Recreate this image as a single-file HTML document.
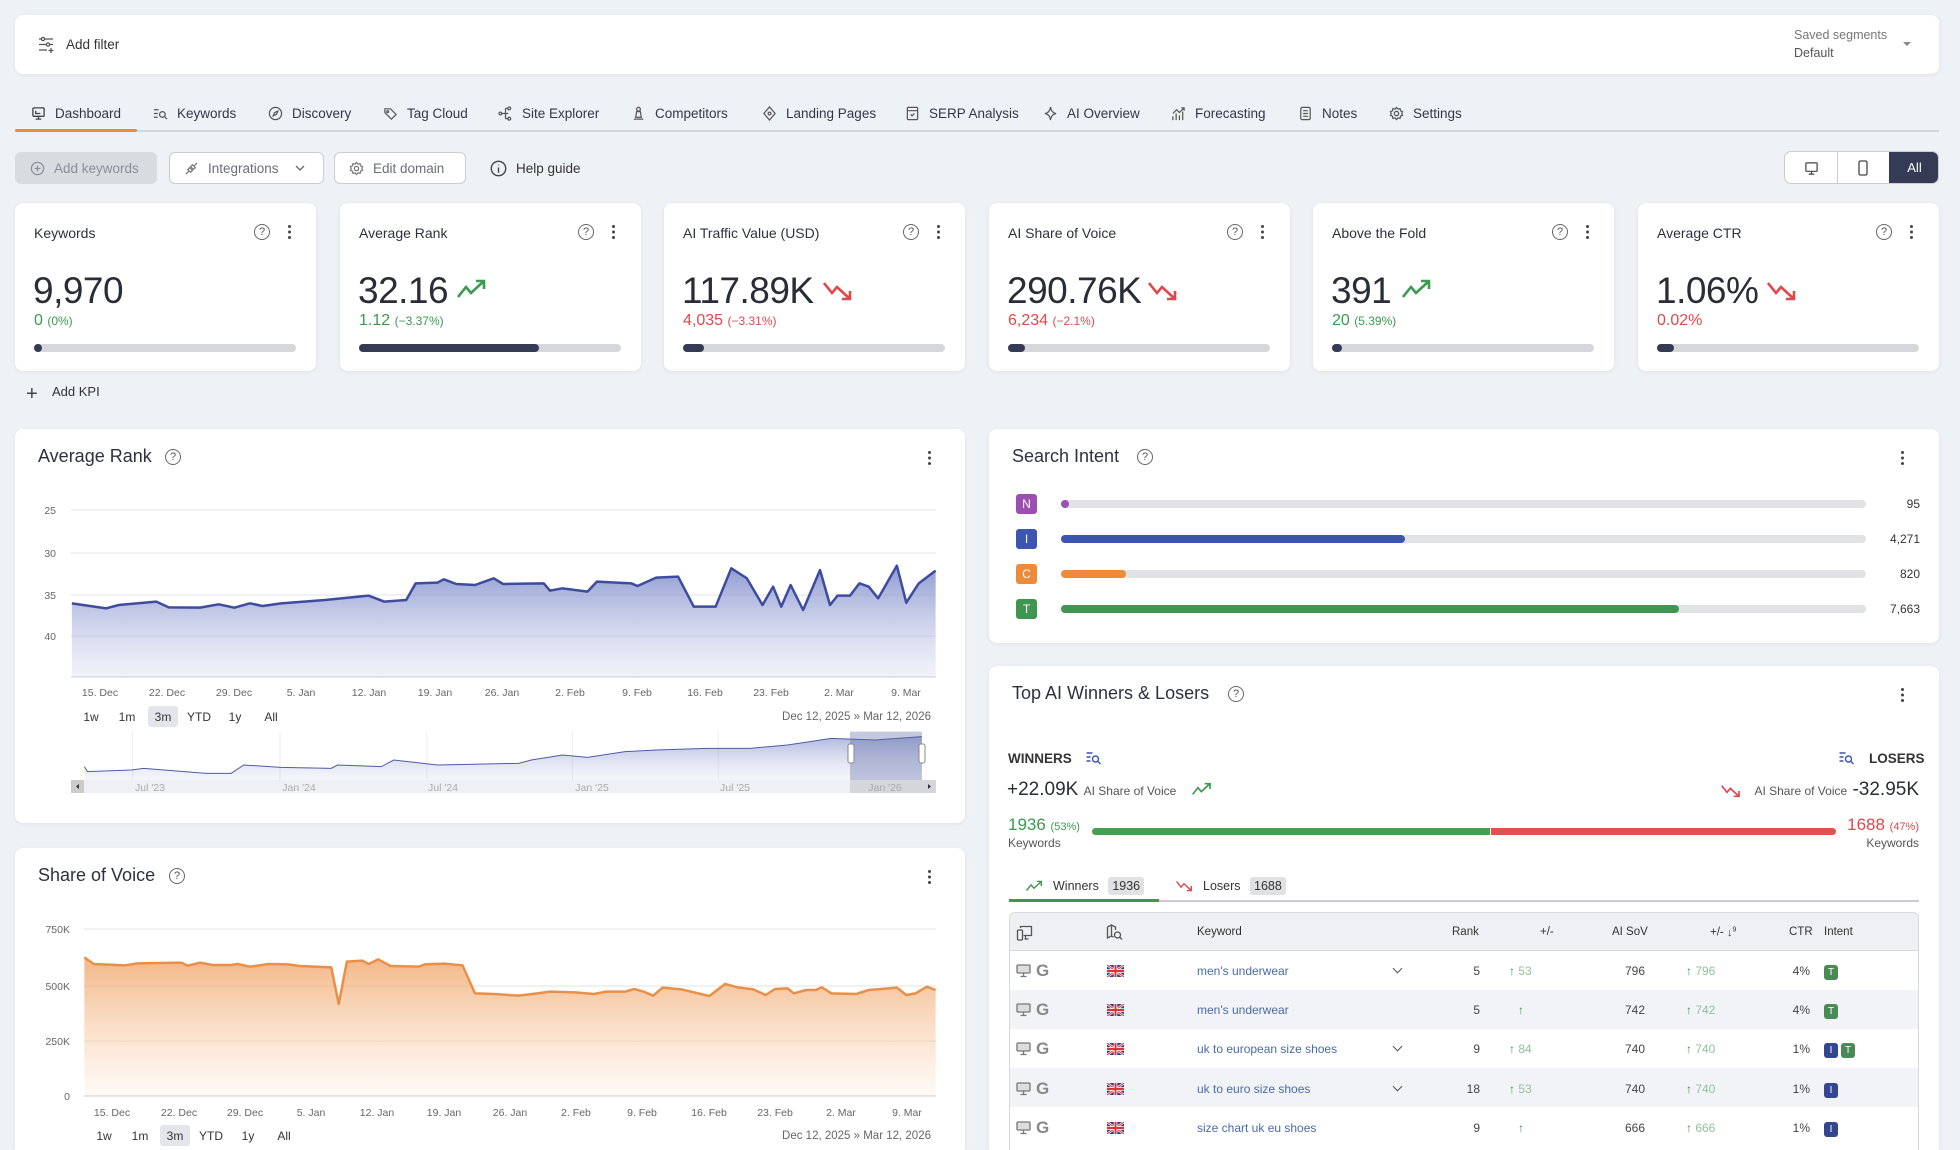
<!DOCTYPE html>
<html style="width:1960px;height:1150px;overflow:hidden"><head><meta charset="utf-8">
<style>
*{box-sizing:border-box;margin:0;padding:0}
body{width:1960px;height:1150px;overflow:hidden;background:#eef1f5;font-family:"Liberation Sans",sans-serif;color:#2e3040;position:relative}
.a{position:absolute}
.card{position:absolute;background:#fff;border-radius:8px;box-shadow:0 1px 4px rgba(0,0,0,.07)}
.tab{position:absolute;top:106px;font-size:13.5px;color:#33364a;display:flex;align-items:center;gap:9px}
.tab svg{width:15px;height:15px}
.btn{position:absolute;top:152px;height:32px;border-radius:6px;border:1px solid #c9ccd3;background:#fff;font-size:13.5px;color:#6b6e7a;display:flex;align-items:center;gap:9px;padding:0 14px}
.kt{position:absolute;top:225px;font-size:14px;color:#2e3040}
.kv{position:absolute;top:270px;font-size:37px;color:#2a2c38;letter-spacing:-.5px}
.ks{position:absolute;top:312px;font-size:16px}
.ks small{font-size:12px}
.pb{position:absolute;top:344px;height:8px;border-radius:4px;background:#d6d7da;width:262px}
.pb i{display:block;height:8px;border-radius:4px;background:#363b55}
.qi{position:absolute;width:16px;height:16px;border:1.3px solid #666;border-radius:50%;font-size:11px;text-align:center;line-height:14px;color:#555}
.dots{position:absolute;width:4px;height:16px}
.dots:before{content:"";position:absolute;left:1px;top:1px;width:3px;height:3px;border-radius:50%;background:#444;box-shadow:0 5.5px 0 #444,0 11px 0 #444}
.ct{position:absolute;font-size:18px;color:#2e3040}
.lbl{font-size:10.5px;fill:#666;font-family:"Liberation Sans",sans-serif}
.g{color:#3a9a4d}.r{color:#e0474c}
.th{position:absolute;top:926px;font-size:11.5px;color:#333}
.cell{position:absolute;font-size:12px;color:#444}
.kw{color:#4a6aa8}
.ib{display:inline-block;width:14px;height:15px;border-radius:3px;color:#fff;font-size:10px;text-align:center;line-height:15px;margin-right:3px}
.ic{position:absolute}
.G{position:absolute;font-weight:bold;font-size:17px;color:#888}
.ch{position:absolute;width:7px;height:7px;border-right:1.4px solid #555;border-bottom:1.4px solid #555;transform:rotate(45deg)}
.ar{position:absolute;font-size:12px;color:#3a9a4d}
.ar span{color:#8fc39a}
</style></head><body>

<div class="card" style="left:15px;top:15px;width:1924px;height:59px"></div>
<svg class="a" style="left:38px;top:36px" width="16" height="17" viewBox="0 0 16 17" fill="none" stroke="#555" stroke-width="1.3"><path d="M1 3h14M1 8.5h14M1 14h8M13 12v5M10.5 14.5h5"/><circle cx="5" cy="3" r="1.6" fill="#fff"/><circle cx="10" cy="8.5" r="1.6" fill="#fff"/></svg>
<div class="a" style="left:66px;top:37px;font-size:13.5px;color:#333">Add filter</div>
<div class="a" style="left:1794px;top:28px;font-size:12.5px;color:#777">Saved segments</div>
<div class="a" style="left:1794px;top:46px;font-size:12.5px;color:#555">Default</div>
<div class="a" style="left:1903px;top:42px;border:4px solid transparent;border-top:4px solid #888"></div>

<div class="a" style="left:15px;top:130px;width:1924px;height:2px;background:#d3d6dc"></div>
<div class="a" style="left:15px;top:129px;width:122px;height:3px;background:#e98a3c;border-radius:2px"></div>
<div class="tab" style="left:31px"><svg viewBox="0 0 16 16" fill="none" stroke="#444" stroke-width="1.4"><rect x="2" y="2" width="12" height="9" rx="1"/><path d="M8 11v3M5 14h6M5 5v3h5"/></svg>Dashboard</div>
<div class="tab" style="left:153px"><svg viewBox="0 0 16 16" fill="none" stroke="#555" stroke-width="1.3"><path d="M1 4h5M1 8h4M1 12h4"/><circle cx="10" cy="9" r="3"/><path d="M12 11l3 3"/></svg>Keywords</div>
<div class="tab" style="left:268px"><svg viewBox="0 0 16 16" fill="none" stroke="#555" stroke-width="1.3"><circle cx="8" cy="8" r="6.5"/><path d="M10.5 5.5L9 9 5.5 10.5 7 7z"/></svg>Discovery</div>
<div class="tab" style="left:383px"><svg viewBox="0 0 16 16" fill="none" stroke="#555" stroke-width="1.3"><path d="M2 3h6l6 6-5 5-7-7z"/><circle cx="5" cy="6" r="1"/></svg>Tag Cloud</div>
<div class="tab" style="left:498px"><svg viewBox="0 0 16 16" fill="none" stroke="#555" stroke-width="1.3"><circle cx="2.5" cy="8" r="1.5"/><circle cx="12" cy="2.5" r="1.5"/><circle cx="12" cy="13.5" r="1.5"/><path d="M4 8h4M8 2.5v11M8 2.5h2.5M8 13.5h2.5M8 8h3"/></svg>Site Explorer</div>
<div class="tab" style="left:631px"><svg viewBox="0 0 16 16" fill="none" stroke="#555" stroke-width="1.3"><circle cx="8" cy="3.5" r="2"/><path d="M6 6h4l1 6H5zM3 14h10"/></svg>Competitors</div>
<div class="tab" style="left:762px"><svg viewBox="0 0 16 16" fill="none" stroke="#555" stroke-width="1.3"><path d="M8 1l6 7-6 7-6-7z"/><circle cx="8" cy="8" r="1.5"/></svg>Landing Pages</div>
<div class="tab" style="left:905px"><svg viewBox="0 0 16 16" fill="none" stroke="#555" stroke-width="1.3"><rect x="2.5" y="1.5" width="11" height="13" rx="1"/><path d="M2.5 5h11M6 9l1.5 1.5L10 8"/></svg>SERP Analysis</div>
<div class="tab" style="left:1043px"><svg viewBox="0 0 16 16" fill="none" stroke="#555" stroke-width="1.3"><path d="M8 1c.5 4 2.5 6.5 6 7-3.5.5-5.5 3-6 7-.5-4-2.5-6.5-6-7 3.5-.5 5.5-3 6-7z"/></svg>AI Overview</div>
<div class="tab" style="left:1171px"><svg viewBox="0 0 16 16" fill="none" stroke="#555" stroke-width="1.3"><path d="M2 15V11M5.5 15V8M9 15V10M12.5 15V6M2 8l4-4 3 3 5-5M11 2h3v3"/></svg>Forecasting</div>
<div class="tab" style="left:1298px"><svg viewBox="0 0 16 16" fill="none" stroke="#555" stroke-width="1.3"><rect x="3" y="1.5" width="10" height="13" rx="1.5"/><path d="M5.5 5h5M5.5 8h5M5.5 11h5"/></svg>Notes</div>
<div class="tab" style="left:1389px"><svg viewBox="0 0 16 16" fill="none" stroke="#555" stroke-width="1.3"><circle cx="8" cy="8" r="2.3"/><path d="M8 1.5l1.5 1.8 2.3-.5.5 2.3 2.2 1L13.6 8l.9 1.9-2.2 1-.5 2.3-2.3-.5L8 14.5l-1.5-1.8-2.3.5-.5-2.3-2.2-1L2.4 8l-.9-1.9 2.2-1 .5-2.3 2.3.5z"/></svg>Settings</div>

<div class="btn" style="left:15px;width:142px;background:#d8dbe0;border-color:#d8dbe0;color:#8b8e98"><svg width="15" height="15" viewBox="0 0 16 16" fill="none" stroke="#8b8e98" stroke-width="1.3"><circle cx="8" cy="8" r="6.5"/><path d="M8 5v6M5 8h6"/></svg>Add keywords</div>
<div class="btn" style="left:169px;width:155px"><svg width="15" height="15" viewBox="0 0 16 16" fill="none" stroke="#777" stroke-width="1.3"><path d="M2 14l3-3M11 5l3-3M4 9l3 3 2-2-3-3zM7 6l3 3 2-2-3-3z"/></svg>Integrations<svg width="12" height="12" viewBox="0 0 12 12" fill="none" stroke="#666" stroke-width="1.3" style="margin-left:6px"><path d="M2 4l4 4 4-4"/></svg></div>
<div class="btn" style="left:334px;width:132px"><svg width="15" height="15" viewBox="0 0 16 16" fill="none" stroke="#777" stroke-width="1.3"><circle cx="8" cy="8" r="2.3"/><path d="M8 1.5l1.5 1.8 2.3-.5.5 2.3 2.2 1L13.6 8l.9 1.9-2.2 1-.5 2.3-2.3-.5L8 14.5l-1.5-1.8-2.3.5-.5-2.3-2.2-1L2.4 8l-.9-1.9 2.2-1 .5-2.3 2.3.5z"/></svg>Edit domain</div>
<div class="btn" style="left:476px;border:none;background:none;color:#333"><svg width="17" height="17" viewBox="0 0 16 16" fill="none" stroke="#444" stroke-width="1.3"><circle cx="8" cy="8" r="6.8"/><path d="M8 7v5M8 4.3v.8"/></svg>Help guide</div>
<div class="a" style="left:1784px;top:151px;width:155px;height:33px;border:1px solid #c9ccd3;border-radius:7px;background:#fff;overflow:hidden">
 <div class="a" style="left:52px;top:0;width:1px;height:33px;background:#ccc"></div>
 <div class="a" style="left:104px;top:0;width:51px;height:33px;background:#363b55;color:#fff;font-size:13px;text-align:center;line-height:31px">All</div>
 <svg class="a" style="left:19px;top:9px" width="15" height="15" viewBox="0 0 16 16" fill="none" stroke="#444" stroke-width="1.3"><rect x="2" y="2" width="12" height="9" rx="1"/><path d="M8 11v3M5 14h6"/></svg>
 <svg class="a" style="left:71px;top:8px" width="14" height="16" viewBox="0 0 14 16" fill="none" stroke="#444" stroke-width="1.3"><rect x="3" y="1" width="8" height="14" rx="1.5"/></svg>
</div>

<div class="card" style="left:15px;top:203px;width:301px;height:168px"></div>
<div class="card" style="left:340px;top:203px;width:301px;height:168px"></div>
<div class="card" style="left:664px;top:203px;width:301px;height:168px"></div>
<div class="card" style="left:989px;top:203px;width:301px;height:168px"></div>
<div class="card" style="left:1313px;top:203px;width:301px;height:168px"></div>
<div class="card" style="left:1638px;top:203px;width:301px;height:168px"></div>

<div class="kt" style="left:34px">Keywords</div>
<div class="kt" style="left:359px">Average Rank</div>
<div class="kt" style="left:683px">AI Traffic Value (USD)</div>
<div class="kt" style="left:1008px">AI Share of Voice</div>
<div class="kt" style="left:1332px">Above the Fold</div>
<div class="kt" style="left:1657px">Average CTR</div>

<div class="qi" style="left:254px;top:224px">?</div><div class="dots" style="left:287px;top:224px"></div>
<div class="qi" style="left:578px;top:224px">?</div><div class="dots" style="left:611px;top:224px"></div>
<div class="qi" style="left:903px;top:224px">?</div><div class="dots" style="left:936px;top:224px"></div>
<div class="qi" style="left:1227px;top:224px">?</div><div class="dots" style="left:1260px;top:224px"></div>
<div class="qi" style="left:1552px;top:224px">?</div><div class="dots" style="left:1585px;top:224px"></div>
<div class="qi" style="left:1876px;top:224px">?</div><div class="dots" style="left:1909px;top:224px"></div>

<div class="kv" style="left:33px">9,970</div>
<div class="kv" style="left:358px">32.16</div>
<div class="kv" style="left:682px">117.89K</div>
<div class="kv" style="left:1007px">290.76K</div>
<div class="kv" style="left:1331px">391</div>
<div class="kv" style="left:1656px">1.06%</div>

<svg class="a" style="left:457px;top:279px" width="30" height="20" viewBox="0 0 30 20" fill="none" stroke="#3a9a4d" stroke-width="2.6"><path d="M1 18l8-10 5 6L27 2M19 2h8v8"/></svg>
<svg class="a" style="left:823px;top:281px" width="30" height="20" viewBox="0 0 30 20" fill="none" stroke="#e0474c" stroke-width="2.6"><path d="M1 2l8 10 5-6 13 12M19 18h8v-8"/></svg>
<svg class="a" style="left:1148px;top:281px" width="30" height="20" viewBox="0 0 30 20" fill="none" stroke="#e0474c" stroke-width="2.6"><path d="M1 2l8 10 5-6 13 12M19 18h8v-8"/></svg>
<svg class="a" style="left:1402px;top:279px" width="30" height="20" viewBox="0 0 30 20" fill="none" stroke="#3a9a4d" stroke-width="2.6"><path d="M1 18l8-10 5 6L27 2M19 2h8v8"/></svg>
<svg class="a" style="left:1767px;top:281px" width="30" height="20" viewBox="0 0 30 20" fill="none" stroke="#e0474c" stroke-width="2.6"><path d="M1 2l8 10 5-6 13 12M19 18h8v-8"/></svg>

<div class="ks g" style="left:34px">0 <small>(0%)</small></div>
<div class="ks g" style="left:359px">1.12 <small>(−3.37%)</small></div>
<div class="ks r" style="left:683px">4,035 <small>(−3.31%)</small></div>
<div class="ks r" style="left:1008px">6,234 <small>(−2.1%)</small></div>
<div class="ks g" style="left:1332px">20 <small>(5.39%)</small></div>
<div class="ks r" style="left:1657px">0.02%</div>

<div class="pb" style="left:34px"><i style="width:8px"></i></div>
<div class="pb" style="left:359px"><i style="width:180px"></i></div>
<div class="pb" style="left:683px"><i style="width:21px"></i></div>
<div class="pb" style="left:1008px"><i style="width:17px"></i></div>
<div class="pb" style="left:1332px"><i style="width:10px"></i></div>
<div class="pb" style="left:1657px"><i style="width:17px"></i></div>

<div class="a" style="left:26px;top:383px;font-size:20px;color:#444;font-weight:300">+</div>
<div class="a" style="left:52px;top:384px;font-size:13px;color:#333">Add KPI</div>

<div class="card" style="left:15px;top:429px;width:950px;height:394px"></div>
<div class="ct" style="left:38px;top:446px">Average Rank</div>
<div class="qi" style="left:165px;top:449px">?</div>
<div class="dots" style="left:927px;top:450px"></div>

<div class="card" style="left:15px;top:848px;width:950px;height:302px;border-radius:8px 8px 0 0"></div>
<div class="ct" style="left:38px;top:865px">Share of Voice</div>
<div class="qi" style="left:169px;top:868px">?</div>
<div class="dots" style="left:927px;top:869px"></div>

<svg class="a" style="left:0;top:0" width="980" height="1150">
 <defs>
  <linearGradient id="bl" x1="0" y1="0" x2="0" y2="1"><stop offset="0" stop-color="#7a88c8" stop-opacity=".85"/><stop offset="1" stop-color="#c7cde9" stop-opacity=".25"/></linearGradient>
  <linearGradient id="or" x1="0" y1="0" x2="0" y2="1"><stop offset="0" stop-color="#f0a468" stop-opacity=".8"/><stop offset="1" stop-color="#f7c8a0" stop-opacity=".1"/></linearGradient>
 </defs>
 <g stroke="#e2e3e6" stroke-width="1"><path d="M71 510H936M71 553H936M71 595H936M71 636H936"/></g>
 <path d="M71 677H936" stroke="#ccd" />
 <g class="lbl" text-anchor="end"><text x="56" y="514">25</text><text x="56" y="557">30</text><text x="56" y="599">35</text><text x="56" y="640">40</text></g>
 <g transform="translate(0,420) scale(0.625,0.33333)">
  <path fill="url(#bl)" d="M115 771 L115 550 L170 565 L190 555 L250 545 L270 562 L320 563 L350 553 L375 563 L400 550 L420 558 L450 550 L520 540 L590 527 L615 545 L650 540 L665 490 L700 488 L710 478 L730 492 L760 495 L790 475 L805 492 L870 490 L880 512 L900 505 L940 515 L955 485 L1010 490 L1020 498 L1050 473 L1085 470 L1110 560 L1145 560 L1170 445 L1195 475 L1220 555 L1237 500 L1250 560 L1265 495 L1285 570 L1312 450 L1328 555 L1340 527 L1360 527 L1375 490 L1390 500 L1405 535 L1435 437 L1450 548 L1470 490 L1497 452 L1497 771Z"/>
  <path fill="none" stroke="#3d4c9e" stroke-width="2.5" vector-effect="non-scaling-stroke" stroke-linejoin="round" d="M115 550 L170 565 L190 555 L250 545 L270 562 L320 563 L350 553 L375 563 L400 550 L420 558 L450 550 L520 540 L590 527 L615 545 L650 540 L665 490 L700 488 L710 478 L730 492 L760 495 L790 475 L805 492 L870 490 L880 512 L900 505 L940 515 L955 485 L1010 490 L1020 498 L1050 473 L1085 470 L1110 560 L1145 560 L1170 445 L1195 475 L1220 555 L1237 500 L1250 560 L1265 495 L1285 570 L1312 450 L1328 555 L1340 527 L1360 527 L1375 490 L1390 500 L1405 535 L1435 437 L1450 548 L1470 490 L1497 452"/>
  <g stroke="#e3e3e6" vector-effect="non-scaling-stroke"><path d="M212 935V1080M448 935V1080M683 935V1080M916 935V1080M1149 935V1080"/></g>
  <path fill="url(#bl)" opacity=".7" d="M135 1080 L135 1040 L140 1055 L210 1050 L230 1045 L330 1060 L370 1060 L390 1035 L450 1042 L530 1045 L540 1035 L610 1040 L630 1020 L700 1035 L830 1030 L850 1020 L900 1005 L940 1012 L1000 995 L1050 990 L1130 985 L1200 985 L1260 975 L1330 955 L1400 960 L1475 950 L1475 1080Z"/>
  <path fill="none" stroke="#4d5ca8" stroke-width="1" vector-effect="non-scaling-stroke" d="M135 1040 L140 1055 L210 1050 L230 1045 L330 1060 L370 1060 L390 1035 L450 1042 L530 1045 L540 1035 L610 1040 L630 1020 L700 1035 L830 1030 L850 1020 L900 1005 L940 1012 L1000 995 L1050 990 L1130 985 L1200 985 L1260 975 L1330 955 L1400 960 L1475 950"/>
  <rect x="1360" y="935" width="115" height="145" fill="#5a65a0" opacity=".35"/>
 </g>
 <rect x="848" y="744" width="6" height="19" rx="2" fill="#fff" stroke="#888"/>
 <rect x="919" y="744" width="6" height="19" rx="2" fill="#fff" stroke="#888"/>
 <rect x="71" y="780" width="865" height="13" fill="#eef0f3"/>
 <rect x="850" y="780" width="86" height="13" fill="#d4d6db"/>
 <rect x="71" y="780" width="13" height="13" fill="#ccc"/>
 <path d="M79 784l-3 2.5 3 2.5z" fill="#333"/><path d="M928 784l3 2.5-3 2.5z" fill="#333"/>
 <g class="lbl" text-anchor="middle" style="fill:#aaa"><text x="150" y="791">Jul '23</text><text x="299" y="791">Jan '24</text><text x="443" y="791">Jul '24</text><text x="592" y="791">Jan '25</text><text x="735" y="791">Jul '25</text><text x="885" y="791">Jan '26</text></g>
 <g class="lbl" text-anchor="middle"><text x="100" y="696">15. Dec</text><text x="167" y="696">22. Dec</text><text x="234" y="696">29. Dec</text><text x="301" y="696">5. Jan</text><text x="369" y="696">12. Jan</text><text x="435" y="696">19. Jan</text><text x="502" y="696">26. Jan</text><text x="570" y="696">2. Feb</text><text x="637" y="696">9. Feb</text><text x="705" y="696">16. Feb</text><text x="771" y="696">23. Feb</text><text x="839" y="696">2. Mar</text><text x="906" y="696">9. Mar</text></g>
 <rect x="148" y="706" width="30" height="21" rx="3" fill="#e3e5ea"/>
 <g style="font-size:12px;fill:#333;font-family:'Liberation Sans',sans-serif" text-anchor="middle"><text x="91" y="721">1w</text><text x="127" y="721">1m</text><text x="163" y="721">3m</text><text x="199" y="721">YTD</text><text x="235" y="721">1y</text><text x="271" y="721">All</text></g>
 <text x="931" y="720" text-anchor="end" class="lbl" style="font-size:11.5px">Dec 12, 2025  »  Mar 12, 2026</text>

 <g stroke="#e2e3e6"><path d="M84 929H936M84 986H936M84 1041H936"/></g>
 <path d="M84 1096H936" stroke="#ccd"/>
 <g class="lbl" text-anchor="end"><text x="70" y="933">750K</text><text x="70" y="990">500K</text><text x="70" y="1045">250K</text><text x="70" y="1100">0</text></g>
 <g transform="translate(0,840) scale(0.625,0.33333)">
  <path fill="url(#or)" d="M135 768 L135 352 L150 372 L200 376 L220 370 L290 368 L300 377 L320 368 L340 375 L370 375 L380 372 L400 380 L430 372 L460 373 L480 378 L530 382 L542 492 L555 365 L580 362 L590 372 L605 358 L625 378 L670 380 L680 373 L710 371 L740 376 L760 460 L790 462 L830 467 L860 460 L880 455 L920 457 L950 462 L970 455 L1000 455 L1015 447 L1030 455 L1045 467 L1060 443 L1090 448 L1135 468 L1160 432 L1180 442 L1205 448 L1225 465 L1240 447 L1260 445 L1270 460 L1290 450 L1305 450 L1315 442 L1330 460 L1370 462 L1390 450 L1435 443 L1450 465 L1465 460 L1483 440 L1497 450 L1497 768Z"/>
  <path fill="none" stroke="#e8904a" stroke-width="2.5" vector-effect="non-scaling-stroke" stroke-linejoin="round" d="M135 352 L150 372 L200 376 L220 370 L290 368 L300 377 L320 368 L340 375 L370 375 L380 372 L400 380 L430 372 L460 373 L480 378 L530 382 L542 492 L555 365 L580 362 L590 372 L605 358 L625 378 L670 380 L680 373 L710 371 L740 376 L760 460 L790 462 L830 467 L860 460 L880 455 L920 457 L950 462 L970 455 L1000 455 L1015 447 L1030 455 L1045 467 L1060 443 L1090 448 L1135 468 L1160 432 L1180 442 L1205 448 L1225 465 L1240 447 L1260 445 L1270 460 L1290 450 L1305 450 L1315 442 L1330 460 L1370 462 L1390 450 L1435 443 L1450 465 L1465 460 L1483 440 L1497 450"/>
 </g>
 <g class="lbl" text-anchor="middle"><text x="112" y="1116">15. Dec</text><text x="179" y="1116">22. Dec</text><text x="245" y="1116">29. Dec</text><text x="311" y="1116">5. Jan</text><text x="377" y="1116">12. Jan</text><text x="444" y="1116">19. Jan</text><text x="510" y="1116">26. Jan</text><text x="576" y="1116">2. Feb</text><text x="642" y="1116">9. Feb</text><text x="709" y="1116">16. Feb</text><text x="775" y="1116">23. Feb</text><text x="841" y="1116">2. Mar</text><text x="907" y="1116">9. Mar</text></g>
 <rect x="160" y="1125" width="30" height="21" rx="3" fill="#e3e5ea"/>
 <g style="font-size:12px;fill:#333;font-family:'Liberation Sans',sans-serif" text-anchor="middle"><text x="104" y="1140">1w</text><text x="140" y="1140">1m</text><text x="175" y="1140">3m</text><text x="211" y="1140">YTD</text><text x="248" y="1140">1y</text><text x="284" y="1140">All</text></g>
 <text x="931" y="1139" text-anchor="end" class="lbl" style="font-size:11.5px">Dec 12, 2025  »  Mar 12, 2026</text>
</svg>

<div class="card" style="left:989px;top:429px;width:950px;height:214px"></div>
<div class="ct" style="left:1012px;top:446px">Search Intent</div>
<div class="qi" style="left:1137px;top:449px">?</div>
<div class="dots" style="left:1900px;top:450px"></div>
<div class="a ib" style="left:1016px;top:494px;width:21px;height:20px;line-height:20px;font-size:12px;background:#9b4fb0">N</div>
<div class="a ib" style="left:1016px;top:529px;width:21px;height:20px;line-height:20px;font-size:12px;background:#3c55b0">I</div>
<div class="a ib" style="left:1016px;top:564px;width:21px;height:20px;line-height:20px;font-size:12px;background:#ec8b3a">C</div>
<div class="a ib" style="left:1016px;top:599px;width:21px;height:20px;line-height:20px;font-size:12px;background:#3f9650">T</div>
<div class="a" style="left:1061px;top:500px;width:805px;height:8px;border-radius:4px;background:#e1e2e5"><div style="width:8px;height:8px;border-radius:4px;background:#9b4fb0"></div></div>
<div class="a" style="left:1061px;top:535px;width:805px;height:8px;border-radius:4px;background:#e1e2e5"><div style="width:344px;height:8px;border-radius:4px;background:#3c55b0"></div></div>
<div class="a" style="left:1061px;top:570px;width:805px;height:8px;border-radius:4px;background:#e1e2e5"><div style="width:65px;height:8px;border-radius:4px;background:#ec8b3a"></div></div>
<div class="a" style="left:1061px;top:605px;width:805px;height:8px;border-radius:4px;background:#e1e2e5"><div style="width:618px;height:8px;border-radius:4px;background:#3f9650"></div></div>
<div class="a" style="left:1860px;top:497px;width:60px;text-align:right;font-size:12px;color:#333">95</div>
<div class="a" style="left:1860px;top:532px;width:60px;text-align:right;font-size:12px;color:#333">4,271</div>
<div class="a" style="left:1860px;top:567px;width:60px;text-align:right;font-size:12px;color:#333">820</div>
<div class="a" style="left:1860px;top:602px;width:60px;text-align:right;font-size:12px;color:#333">7,663</div>

<div class="card" style="left:989px;top:666px;width:950px;height:484px;border-radius:8px 8px 0 0"></div>
<div class="ct" style="left:1012px;top:683px">Top AI Winners &amp; Losers</div>
<div class="qi" style="left:1228px;top:686px">?</div>
<div class="dots" style="left:1900px;top:687px"></div>

<div class="a" style="left:1008px;top:751px;font-size:13.5px;font-weight:bold;color:#333">WINNERS</div>
<svg class="a" style="left:1085px;top:750px" width="17" height="16" viewBox="0 0 16 16" fill="none" stroke="#3c55b0" stroke-width="1.4"><path d="M1 3h6M1 7h4M1 11h4"/><circle cx="10" cy="9" r="3"/><path d="M12 11l3 3"/></svg>
<svg class="a" style="left:1838px;top:750px" width="17" height="16" viewBox="0 0 16 16" fill="none" stroke="#3c55b0" stroke-width="1.4"><path d="M1 3h6M1 7h4M1 11h4"/><circle cx="10" cy="9" r="3"/><path d="M12 11l3 3"/></svg>
<div class="a" style="left:1869px;top:751px;font-size:13.5px;font-weight:bold;color:#333">LOSERS</div>

<div class="a" style="left:1007px;top:779px;font-size:19px;color:#2a2c38">+22.09K <span style="font-size:12px;color:#555">AI Share of Voice</span></div>
<svg class="a" style="left:1192px;top:782px" width="20" height="14" viewBox="0 0 30 20" fill="none" stroke="#3a9a4d" stroke-width="2.5"><path d="M1 18l8-10 5 6L27 2M19 2h8v8"/></svg>
<svg class="a" style="left:1721px;top:784px" width="20" height="14" viewBox="0 0 30 20" fill="none" stroke="#e0474c" stroke-width="2.5"><path d="M1 2l8 10 5-6 13 12M19 18h8v-8"/></svg>
<div class="a" style="left:1745px;top:779px;width:174px;text-align:right;font-size:19px;color:#2a2c38"><span style="font-size:12px;color:#555">AI Share of Voice</span> -32.95K</div>

<div class="a g" style="left:1008px;top:815px;font-size:17px">1936 <span style="font-size:11px">(53%)</span></div>
<div class="a" style="left:1008px;top:836px;font-size:12px;color:#555">Keywords</div>
<div class="a" style="left:1092px;top:828px;width:398px;height:7px;background:#43a04f;border-radius:4px 0 0 4px"></div>
<div class="a" style="left:1491px;top:828px;width:345px;height:7px;background:#e5504f;border-radius:0 4px 4px 0"></div>
<div class="a r" style="left:1800px;top:815px;width:119px;text-align:right;font-size:17px">1688 <span style="font-size:11px">(47%)</span></div>
<div class="a" style="left:1800px;top:836px;width:119px;text-align:right;font-size:12px;color:#555">Keywords</div>

<div class="a" style="left:1009px;top:900px;width:910px;height:2px;background:#c9ccd2"></div>
<div class="a" style="left:1009px;top:899px;width:150px;height:3px;background:#3a9a4d"></div>
<svg class="a" style="left:1026px;top:880px" width="17" height="12" viewBox="0 0 30 20" fill="none" stroke="#3a9a4d" stroke-width="2.5"><path d="M1 18l8-10 5 6L27 2M19 2h8v8"/></svg>
<div class="a" style="left:1053px;top:879px;font-size:12.5px;color:#333">Winners <span style="background:#dfe1e5;padding:2px 4px;border-radius:3px;margin-left:6px">1936</span></div>
<svg class="a" style="left:1176px;top:880px" width="17" height="12" viewBox="0 0 30 20" fill="none" stroke="#e0474c" stroke-width="2.5"><path d="M1 2l8 10 5-6 13 12M19 18h8v-8"/></svg>
<div class="a" style="left:1203px;top:879px;font-size:12.5px;color:#333">Losers <span style="background:#dfe1e5;padding:2px 4px;border-radius:3px;margin-left:6px">1688</span></div>

<div class="a" style="left:1009px;top:912px;width:910px;height:238px;border:1px solid #d5d8de;border-bottom:none;border-radius:6px 6px 0 0;overflow:hidden;background:#fff">
 <div style="height:38px;background:#eef0f4;border-bottom:1px solid #d5d8de"></div>
 <div style="position:absolute;top:77px;width:100%;height:39px;background:#f1f3f7"></div>
 <div style="position:absolute;top:155px;width:100%;height:39px;background:#f1f3f7"></div>
</div>
<svg class="a" style="left:1016px;top:925px" width="17" height="16" viewBox="0 0 16 16" fill="none" stroke="#555" stroke-width="1.3"><rect x="1" y="5" width="5" height="10" rx="1"/><path d="M4 3V1.5h11v9H7M9 10.5v3M8 14h4"/></svg>
<svg class="a" style="left:1106px;top:923px" width="17" height="18" viewBox="0 0 16 18" fill="none" stroke="#555" stroke-width="1.3"><path d="M1 4l4-2 4 2v3M1 4v11l4-2 2 1M5 2v11"/><circle cx="11" cy="12" r="3"/><path d="M13 14l2.5 2.5"/></svg>
<div class="th" style="left:1197px">Keyword</div>
<div class="th" style="left:1452px">Rank</div>
<div class="th" style="left:1540px">+/-</div>
<div class="th" style="left:1612px">AI SoV</div>
<div class="th" style="left:1710px">+/- <span style="font-size:11px">↓<sup style="font-size:7px">9</sup></span></div>
<div class="th" style="left:1789px">CTR</div>
<div class="th" style="left:1824px">Intent</div>

<svg class="ic" style="left:1016px;top:964px" width="15" height="14" viewBox="0 0 15 14" fill="none" stroke="#777" stroke-width="1.3"><rect x="1" y="1" width="13" height="8" rx="1" fill="#ddd"/><path d="M7.5 9v3M4.5 12.5h6"/></svg><div class="G" style="left:1036px;top:961px">G</div>
<svg class="ic" style="left:1016px;top:1003px" width="15" height="14" viewBox="0 0 15 14" fill="none" stroke="#777" stroke-width="1.3"><rect x="1" y="1" width="13" height="8" rx="1" fill="#ddd"/><path d="M7.5 9v3M4.5 12.5h6"/></svg><div class="G" style="left:1036px;top:1000px">G</div>
<svg class="ic" style="left:1016px;top:1042px" width="15" height="14" viewBox="0 0 15 14" fill="none" stroke="#777" stroke-width="1.3"><rect x="1" y="1" width="13" height="8" rx="1" fill="#ddd"/><path d="M7.5 9v3M4.5 12.5h6"/></svg><div class="G" style="left:1036px;top:1039px">G</div>
<svg class="ic" style="left:1016px;top:1082px" width="15" height="14" viewBox="0 0 15 14" fill="none" stroke="#777" stroke-width="1.3"><rect x="1" y="1" width="13" height="8" rx="1" fill="#ddd"/><path d="M7.5 9v3M4.5 12.5h6"/></svg><div class="G" style="left:1036px;top:1079px">G</div>
<svg class="ic" style="left:1016px;top:1121px" width="15" height="14" viewBox="0 0 15 14" fill="none" stroke="#777" stroke-width="1.3"><rect x="1" y="1" width="13" height="8" rx="1" fill="#ddd"/><path d="M7.5 9v3M4.5 12.5h6"/></svg><div class="G" style="left:1036px;top:1118px">G</div>

<svg class="ic" style="left:1107px;top:965px" width="17" height="12" viewBox="0 0 17 12"><rect width="17" height="12" fill="#2b3f85"/><path d="M0 0L17 12M17 0L0 12" stroke="#fff" stroke-width="2.4"/><path d="M0 0L17 12M17 0L0 12" stroke="#d33" stroke-width="1"/><path d="M8.5 0v12M0 6h17" stroke="#fff" stroke-width="3.6"/><path d="M8.5 0v12M0 6h17" stroke="#d33" stroke-width="2"/></svg>
<svg class="ic" style="left:1107px;top:1004px" width="17" height="12" viewBox="0 0 17 12"><rect width="17" height="12" fill="#2b3f85"/><path d="M0 0L17 12M17 0L0 12" stroke="#fff" stroke-width="2.4"/><path d="M0 0L17 12M17 0L0 12" stroke="#d33" stroke-width="1"/><path d="M8.5 0v12M0 6h17" stroke="#fff" stroke-width="3.6"/><path d="M8.5 0v12M0 6h17" stroke="#d33" stroke-width="2"/></svg>
<svg class="ic" style="left:1107px;top:1043px" width="17" height="12" viewBox="0 0 17 12"><rect width="17" height="12" fill="#2b3f85"/><path d="M0 0L17 12M17 0L0 12" stroke="#fff" stroke-width="2.4"/><path d="M0 0L17 12M17 0L0 12" stroke="#d33" stroke-width="1"/><path d="M8.5 0v12M0 6h17" stroke="#fff" stroke-width="3.6"/><path d="M8.5 0v12M0 6h17" stroke="#d33" stroke-width="2"/></svg>
<svg class="ic" style="left:1107px;top:1083px" width="17" height="12" viewBox="0 0 17 12"><rect width="17" height="12" fill="#2b3f85"/><path d="M0 0L17 12M17 0L0 12" stroke="#fff" stroke-width="2.4"/><path d="M0 0L17 12M17 0L0 12" stroke="#d33" stroke-width="1"/><path d="M8.5 0v12M0 6h17" stroke="#fff" stroke-width="3.6"/><path d="M8.5 0v12M0 6h17" stroke="#d33" stroke-width="2"/></svg>
<svg class="ic" style="left:1107px;top:1122px" width="17" height="12" viewBox="0 0 17 12"><rect width="17" height="12" fill="#2b3f85"/><path d="M0 0L17 12M17 0L0 12" stroke="#fff" stroke-width="2.4"/><path d="M0 0L17 12M17 0L0 12" stroke="#d33" stroke-width="1"/><path d="M8.5 0v12M0 6h17" stroke="#fff" stroke-width="3.6"/><path d="M8.5 0v12M0 6h17" stroke="#d33" stroke-width="2"/></svg>

<div class="cell kw" style="left:1197px;top:964px">men's underwear</div>
<div class="cell kw" style="left:1197px;top:1003px">men's underwear</div>
<div class="cell kw" style="left:1197px;top:1042px">uk to european size shoes</div>
<div class="cell kw" style="left:1197px;top:1082px">uk to euro size shoes</div>
<div class="cell kw" style="left:1197px;top:1121px">size chart uk eu shoes</div>

<div class="ch" style="left:1394px;top:965px"></div>
<div class="ch" style="left:1394px;top:1043px"></div>
<div class="ch" style="left:1394px;top:1083px"></div>

<div class="cell" style="left:1440px;width:40px;text-align:right;top:964px">5</div>
<div class="cell" style="left:1440px;width:40px;text-align:right;top:1003px">5</div>
<div class="cell" style="left:1440px;width:40px;text-align:right;top:1042px">9</div>
<div class="cell" style="left:1440px;width:40px;text-align:right;top:1082px">18</div>
<div class="cell" style="left:1440px;width:40px;text-align:right;top:1121px">9</div>

<div class="ar" style="left:1509px;top:964px">↑<span> 53</span></div>
<div class="ar" style="left:1518px;top:1003px">↑</div>
<div class="ar" style="left:1509px;top:1042px">↑<span> 84</span></div>
<div class="ar" style="left:1509px;top:1082px">↑<span> 53</span></div>
<div class="ar" style="left:1518px;top:1121px">↑</div>

<div class="cell" style="left:1600px;width:45px;text-align:right;top:964px">796</div>
<div class="cell" style="left:1600px;width:45px;text-align:right;top:1003px">742</div>
<div class="cell" style="left:1600px;width:45px;text-align:right;top:1042px">740</div>
<div class="cell" style="left:1600px;width:45px;text-align:right;top:1082px">740</div>
<div class="cell" style="left:1600px;width:45px;text-align:right;top:1121px">666</div>

<div class="ar" style="left:1686px;top:964px">↑<span> 796</span></div>
<div class="ar" style="left:1686px;top:1003px">↑<span> 742</span></div>
<div class="ar" style="left:1686px;top:1042px">↑<span> 740</span></div>
<div class="ar" style="left:1686px;top:1082px">↑<span> 740</span></div>
<div class="ar" style="left:1686px;top:1121px">↑<span> 666</span></div>

<div class="cell" style="left:1770px;width:40px;text-align:right;top:964px">4%</div>
<div class="cell" style="left:1770px;width:40px;text-align:right;top:1003px">4%</div>
<div class="cell" style="left:1770px;width:40px;text-align:right;top:1042px">1%</div>
<div class="cell" style="left:1770px;width:40px;text-align:right;top:1082px">1%</div>
<div class="cell" style="left:1770px;width:40px;text-align:right;top:1121px">1%</div>

<div class="a" style="left:1824px;top:962px"><span class="ib" style="background:#4a8a55">T</span></div>
<div class="a" style="left:1824px;top:1001px"><span class="ib" style="background:#4a8a55">T</span></div>
<div class="a" style="left:1824px;top:1040px"><span class="ib" style="background:#34468f">I</span><span class="ib" style="background:#4a8a55">T</span></div>
<div class="a" style="left:1824px;top:1080px"><span class="ib" style="background:#34468f">I</span></div>
<div class="a" style="left:1824px;top:1119px"><span class="ib" style="background:#34468f">I</span></div>

</body></html>
